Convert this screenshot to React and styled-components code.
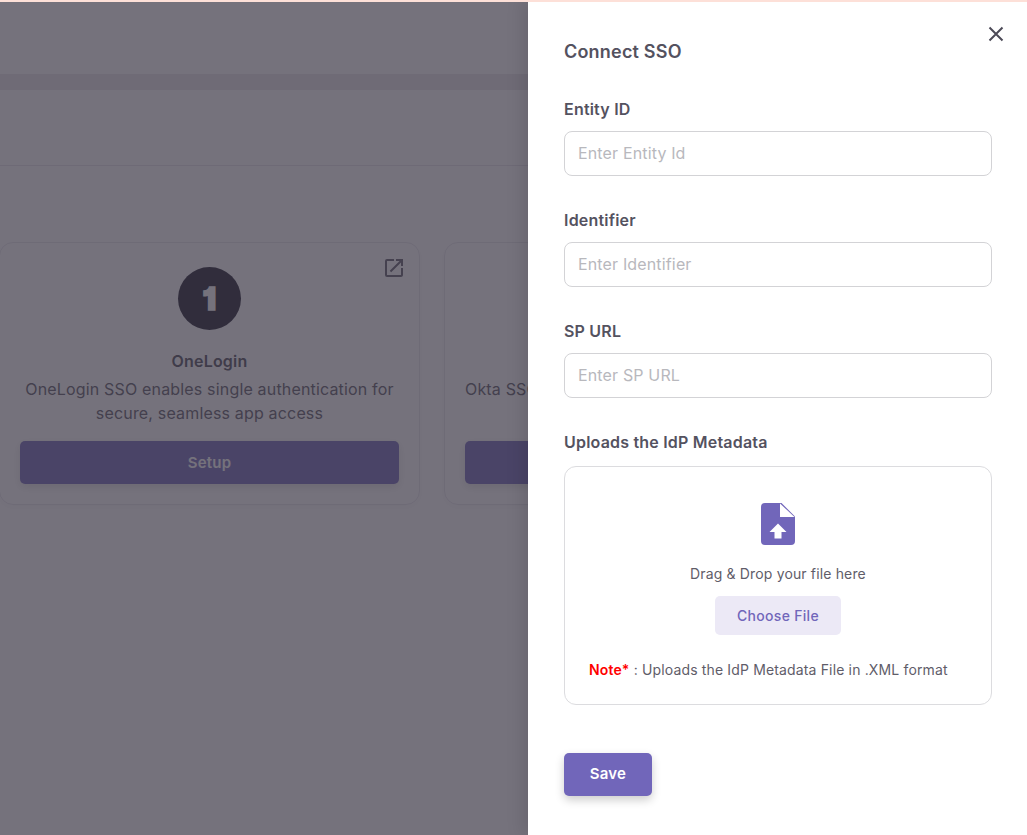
import { MdOutlineOpenInNew } from "react-icons/md";
import styled, { createGlobalStyle } from "styled-components";

const GlobalStyle = createGlobalStyle`
  * {
    box-sizing: border-box;
  }
  html,
  body {
    margin: 0;
    padding: 0;
    background: #ffffff;
    font-family: Inter, "Liberation Sans", sans-serif;
    letter-spacing: 0.2px;
  }
`;

const Page = styled.div`
  position: relative;
  height: 100vh;
  overflow: hidden;
`;

const TopStripe = styled.div`
  position: absolute;
  top: 0;
  left: 0;
  right: 0;
  height: 2px;
  background: #fde0d8;
  z-index: 5;
`;

const Header = styled.header`
  height: 74px;
  background: #ffffff;
`;

const Band = styled.div`
  height: 16px;
  background: #e9e7ec;
`;

const SubNav = styled.nav`
  height: 76px;
  border-bottom: 1px solid #e6e4ea;
`;

const CardRow = styled.section`
  display: flex;
  gap: 24px;
  margin: 76px 0 0 -1px;
`;

const Card = styled.article`
  position: relative;
  flex: 0 0 421px;
  height: 263px;
  padding: 24px 20px 0;
  border: 1px solid #e8e6ec;
  border-radius: 14px;
  box-shadow: 0 2px 8px rgba(0, 0, 0, 0.04);
  display: flex;
  flex-direction: column;
  align-items: center;
  text-align: center;
`;

const OpenLink = styled.span`
  position: absolute;
  top: 13px;
  right: 13px;
  display: flex;
  color: #5f5c6a;
  font-size: 24px;
`;

const NumberBadge = styled.div`
  width: 63px;
  height: 63px;
  border-radius: 50%;
  background: #1c1a2b;
  color: #ffffff;
  font-size: 31px;
  font-weight: 900;
  font-feature-settings: "cv01";
  -webkit-text-stroke: 1.5px #ffffff;
  display: flex;
  align-items: center;
  justify-content: center;
`;

const CardTitle = styled.h3`
  margin: 20px 0 0;
  font-size: 16px;
  line-height: 22px;
  font-weight: 600;
  color: #4c4a57;
`;

const CardText = styled.p`
  margin: 5px 0 0;
  font-size: 16px;
  line-height: 24px;
  font-weight: 400;
  letter-spacing: 0.17px;
  color: #5a5864;
  white-space: nowrap;
`;

const SetupButton = styled.button`
  width: 100%;
  height: 43px;
  margin-top: 16px;
  border: 0;
  border-radius: 5px;
  background: #7166ba;
  color: #ffffff;
  font: 600 15px/20px Inter, "Liberation Sans", sans-serif;
  letter-spacing: 0.2px;
  box-shadow: 0 3px 8px rgba(0, 0, 0, 0.12);
`;

const Scrim = styled.div`
  position: absolute;
  inset: 0;
  background: rgba(58, 54, 68, 0.7);
  z-index: 2;
`;

const Drawer = styled.aside`
  position: absolute;
  top: 0;
  right: 0;
  bottom: 0;
  width: 499px;
  padding: 41px 35px 0 36px;
  background: #ffffff;
  box-shadow: -6px 0 16px rgba(0, 0, 0, 0.1);
  z-index: 3;
`;

const CloseButton = styled.button`
  position: absolute;
  top: 24px;
  right: 21px;
  width: 20px;
  height: 20px;
  padding: 0;
  border: 0;
  background: none;
  color: #4c4a57;
  display: flex;
`;

const DrawerTitle = styled.h2`
  margin: 0 0 35px;
  font-size: 18px;
  line-height: 22px;
  font-weight: 600;
  color: #54525f;
`;

const Form = styled.form`
  display: flex;
  flex-direction: column;
  gap: 33px;
`;

const Field = styled.div`
  display: flex;
  flex-direction: column;
  gap: ${(props) => props.$gap || 10}px;
`;

const Label = styled.label`
  font-size: 16px;
  line-height: 23px;
  font-weight: 600;
  color: #54525f;
`;

const Input = styled.input`
  width: 100%;
  height: 45px;
  padding: 0 13px 2px;
  border: 1px solid #d3d3d6;
  border-radius: 8px;
  outline: none;
  font: 400 16px/20px Inter, "Liberation Sans", sans-serif;
  letter-spacing: 0.15px;
  color: #4c4a57;

  &::placeholder {
    color: #b8b8bd;
    opacity: 1;
  }
`;

const DropZone = styled.div`
  height: 239px;
  padding: 36px 24px 0;
  border: 1px solid #dcdcdf;
  border-radius: 12px;
  display: flex;
  flex-direction: column;
  align-items: center;
`;

const DropText = styled.p`
  margin: 19px 0 0;
  font-size: 14px;
  line-height: 20px;
  letter-spacing: 0.15px;
  color: #5f5d69;
`;

const ChooseButton = styled.button`
  width: 126px;
  height: 39px;
  margin-top: 12px;
  border: 0;
  border-radius: 5px;
  background: #ece9f6;
  color: #7166ba;
  font: 500 14px/20px Inter, "Liberation Sans", sans-serif;
  letter-spacing: 0.3px;
`;

const Note = styled.p`
  align-self: flex-start;
  margin: 25px 0 0;
  font-size: 14px;
  line-height: 20px;
  letter-spacing: 0.15px;
  color: #5f5d69;
  white-space: nowrap;
`;

const NoteMark = styled.b`
  color: #ff0000;
  font-weight: 600;
`;

const SaveButton = styled.button`
  width: 88px;
  height: 43px;
  margin-top: 48px;
  padding: 0 0 2px;
  border: 0;
  border-radius: 5px;
  background: #7166ba;
  color: #ffffff;
  font: 600 15px/20px Inter, "Liberation Sans", sans-serif;
  letter-spacing: 0.2px;
  box-shadow: 0 4px 10px rgba(0, 0, 0, 0.2);
`;

const FileUploadIcon = () => (
  <svg width="34" height="42" viewBox="0 0 34 42" aria-hidden="true">
    <path
      d="M4 0H20.5L34 13.5V38a4 4 0 0 1-4 4H4a4 4 0 0 1-4-4V4a4 4 0 0 1 4-4Z"
      fill="#7166ba"
    />
    <path d="M19 0.5V14H33.5Z" fill="#ffffff" />
    <path d="M17 20.5L25.5 29H20.5V35.5H13.5V29H8.5Z" fill="#ffffff" />
  </svg>
);

const CloseIcon = () => (
  <svg width="20" height="20" viewBox="0 0 20 20" fill="none" aria-hidden="true">
    <path
      d="M3.5 3.5L16.5 16.5M16.5 3.5L3.5 16.5"
      stroke="currentColor"
      strokeWidth="2"
    />
  </svg>
);

const providers = [
  {
    id: 1,
    name: "OneLogin",
    lines: ["OneLogin SSO enables single authentication for", "secure, seamless app access"],
  },
  {
    id: 2,
    name: "Okta",
    lines: ["Okta SSO enables secure single authentication to", "all of your workforce apps"],
  },
];

const fields = [
  { id: "entity", label: "Entity ID", placeholder: "Enter Entity Id" },
  { id: "identifier", label: "Identifier", placeholder: "Enter Identifier" },
  { id: "spUrl", label: "SP URL", placeholder: "Enter SP URL" },
];

export default function App() {
  return (
    <Page>
      <GlobalStyle />
      <TopStripe />
      <Header />
      <Band />
      <SubNav />
      <CardRow>
        {providers.map((item) => (
          <Card key={item.id}>
            <OpenLink>
              <MdOutlineOpenInNew />
            </OpenLink>
            <NumberBadge>{item.id}</NumberBadge>
            <CardTitle>{item.name}</CardTitle>
            <CardText>
              {item.lines[0]}
              <br />
              {item.lines[1]}
            </CardText>
            <SetupButton type="button">Setup</SetupButton>
          </Card>
        ))}
      </CardRow>
      <Scrim />
      <Drawer>
        <CloseButton type="button" aria-label="Close">
          <CloseIcon />
        </CloseButton>
        <DrawerTitle>Connect SSO</DrawerTitle>
        <Form>
          {fields.map((field) => (
            <Field key={field.id}>
              <Label htmlFor={field.id}>{field.label}</Label>
              <Input id={field.id} placeholder={field.placeholder} />
            </Field>
          ))}
          <Field $gap={12}>
            <Label>Uploads the IdP Metadata</Label>
            <DropZone>
              <FileUploadIcon />
              <DropText>Drag &amp; Drop your file here</DropText>
              <ChooseButton type="button">Choose File</ChooseButton>
              <Note>
                <NoteMark>Note*</NoteMark> : Uploads the IdP Metadata File in .XML format
              </Note>
            </DropZone>
          </Field>
        </Form>
        <SaveButton type="button">Save</SaveButton>
      </Drawer>
    </Page>
  );
}
